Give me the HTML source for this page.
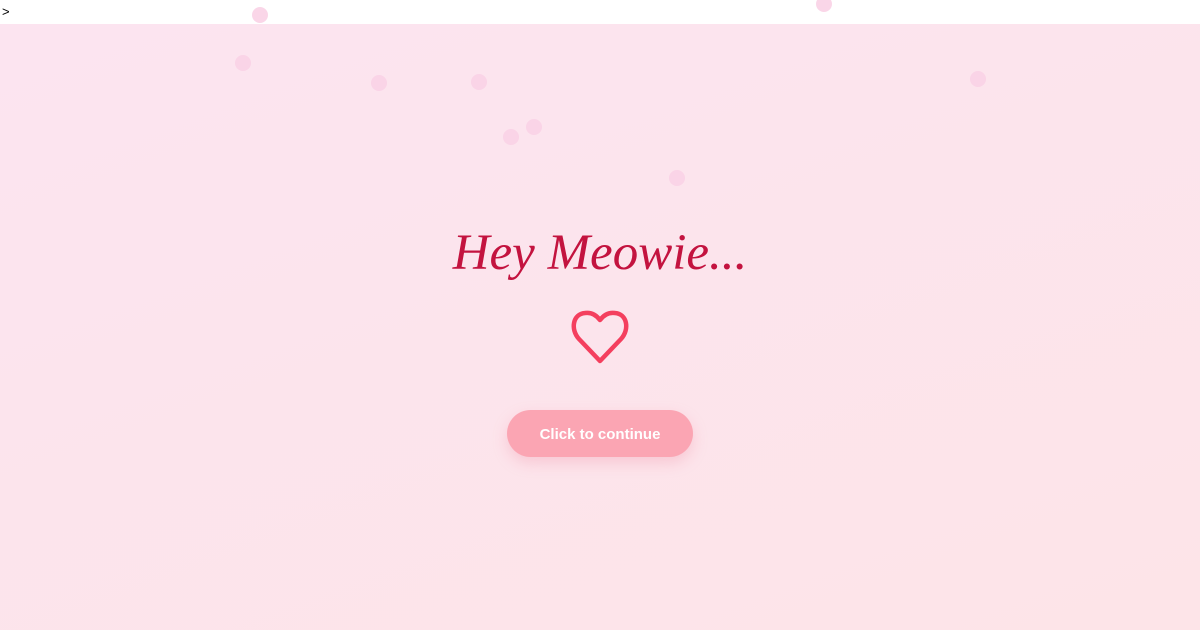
<!DOCTYPE html>
<html><head><style>
body{margin:0;width:1200px;height:630px;overflow:hidden;background:#fff;font-family:"Liberation Sans",sans-serif;position:relative}
.top{position:absolute;left:2px;top:4px;font-size:13px;color:#000}
.bg{position:absolute;left:0;top:24px;width:1200px;height:606px;background:linear-gradient(160deg,#fce4f0,#fde4e8)}
.d{position:absolute;width:16px;height:16px;border-radius:50%;background:#f9d2e5;opacity:.9}
h1{position:absolute;left:0;width:1200px;top:224px;margin:0;text-align:center;font-family:"Liberation Serif",serif;font-style:italic;font-weight:normal;font-size:51px;color:#c3133f;letter-spacing:0}
.btn{position:absolute;left:507px;top:410px;width:186px;height:47px;border-radius:24px;background:#fba5b3;color:#fff;font-weight:bold;font-size:15px;text-align:center;line-height:49px;box-shadow:0 6px 14px rgba(240,150,170,.35)}
</style></head><body>
<div class="top">&gt;</div>
<div class="bg"></div>
<div class="d" style="left:252px;top:7px"></div>
<div class="d" style="left:235px;top:55px"></div>
<div class="d" style="left:371px;top:75px"></div>
<div class="d" style="left:471px;top:74px"></div>
<div class="d" style="left:503px;top:129px"></div>
<div class="d" style="left:526px;top:119px"></div>
<div class="d" style="left:669px;top:170px"></div>
<div class="d" style="left:816px;top:-4px"></div>
<div class="d" style="left:970px;top:71px"></div>
<h1>Hey Meowie...</h1>
<svg style="position:absolute;left:568px;top:306px" width="64" height="60" viewBox="0 0 64 60">
<path d="M32 55 L11 33 C2 23 5 8 17 7 C24 6 29 10 32 14 C35 10 40 6 47 7 C59 8 62 23 53 33 Z" fill="none" stroke="#f43f5e" stroke-width="4.5" stroke-linejoin="round"/>
</svg>
<div class="btn">Click to continue</div>
</body></html>
